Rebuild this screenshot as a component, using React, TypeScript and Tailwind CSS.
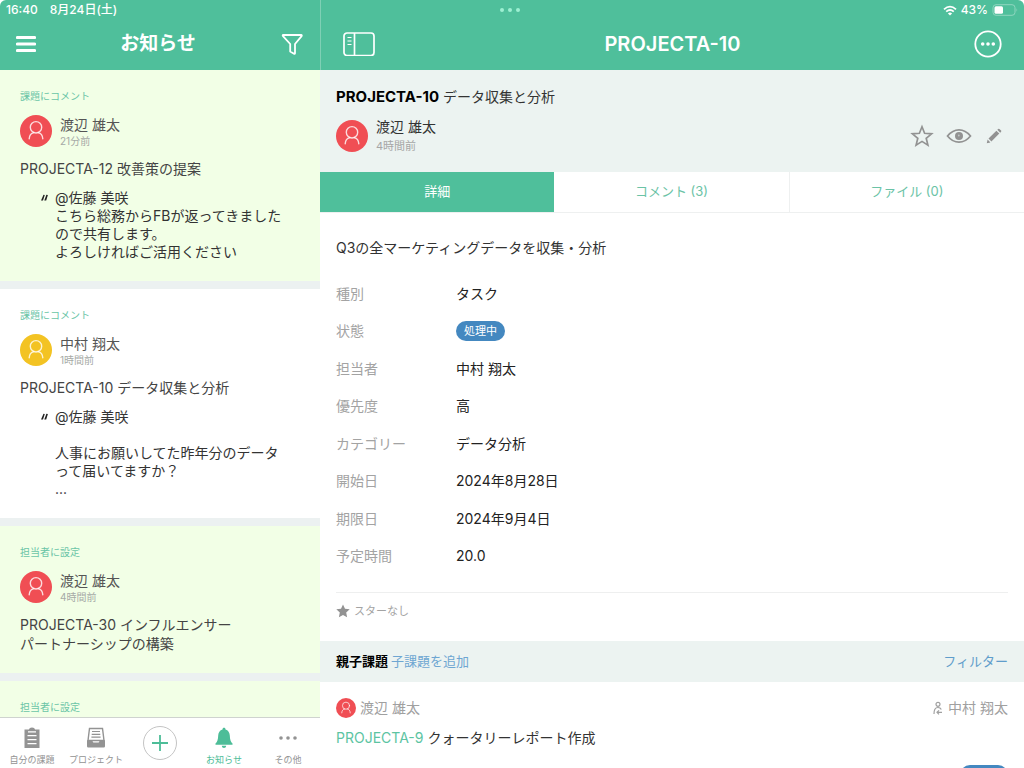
import type { ReactNode } from 'react';

type Notice = {
  kind: string;
  name?: string;
  ago?: string;
  title?: string;
  quote?: string;
  unread: boolean;
  color: 'red' | 'yellow';
};

const notices: Notice[] = [
  {
    kind: '課題にコメント',
    name: '渡辺 雄太',
    ago: '21分前',
    title: 'PROJECTA-12 改善策の提案',
    quote: '@佐藤 美咲\nこちら総務からFBが返ってきました\nので共有します。\nよろしければご活用ください',
    unread: true,
    color: 'red',
  },
  {
    kind: '課題にコメント',
    name: '中村 翔太',
    ago: '1時間前',
    title: 'PROJECTA-10 データ収集と分析',
    quote: '@佐藤 美咲\n\n人事にお願いしてた昨年分のデータ\nって届いてますか？\n...',
    unread: false,
    color: 'yellow',
  },
  {
    kind: '担当者に設定',
    name: '渡辺 雄太',
    ago: '4時間前',
    title: 'PROJECTA-30 インフルエンサー\nパートナーシップの構築',
    unread: true,
    color: 'red',
  },
  {
    kind: '担当者に設定',
    unread: true,
    color: 'red',
  },
];

const fields: [string, ReactNode][] = [
  ['種別', 'タスク'],
  [
    '状態',
    <span className="inline-flex h-5 items-center rounded-full bg-[#4488c0] px-2 text-[11px] text-white">処理中</span>,
  ],
  ['担当者', '中村 翔太'],
  ['優先度', '高'],
  ['カテゴリー', 'データ分析'],
  ['開始日', '2024年8月28日'],
  ['期限日', '2024年9月4日'],
  ['予定時間', '20.0'],
];

function Avatar({ color, small }: { color: 'red' | 'yellow'; small?: boolean }) {
  return (
    <svg
      viewBox="0 0 32 32"
      aria-hidden="true"
      className={`${small ? 'size-5' : 'size-8'} shrink-0 ${color === 'red' ? 'text-[#f04e54]' : 'text-[#f3c323]'}`}
    >
      <circle cx="16" cy="16" r="16" fill="currentColor" />
      <g fill="none" stroke="#fff" strokeOpacity="0.8" strokeWidth="1.4" strokeLinecap="round">
        <circle cx="16" cy="12.3" r="5.7" />
        <path d="M9.2 23.8c.2-3.600 1.800-5.600 4.600-6.200M22.800 23.800c-.2-3.600-1.800-5.600-4.600-6.200" />
      </g>
    </svg>
  );
}

function NoticeCard({ notice }: { notice: Notice }) {
  return (
    <article
      className={`border-b-8 border-[#ecf1f1] px-5 pt-[18px] pb-5 ${notice.unread ? 'bg-[#f2ffe6]' : 'bg-white'}`}
    >
      <p className="text-[10px] leading-4 text-[#6bc5a7]">{notice.kind}</p>
      {notice.name && (
        <div className="mt-[11px] flex items-center gap-2">
          <Avatar color={notice.color} />
          <div>
            <p className="text-sm leading-5 text-[#555]">{notice.name}</p>
            <p className="text-[10px] leading-3 text-[#a6aaa6]">{notice.ago}</p>
          </div>
        </div>
      )}
      {notice.title && (
        <h2 className="mt-3 text-sm leading-[19px] whitespace-pre-line text-[#444]">{notice.title}</h2>
      )}
      {notice.quote && (
        <div className="mt-[11px] flex text-sm leading-[18px] text-[#333]">
          <svg viewBox="0 0 8 8" aria-hidden="true" className="mt-[5px] mr-[7px] ml-5 size-2 shrink-0">
            <path d="M3.500.800 4.800 1 3 6.500H1zM6.400.800 7.900 1 6.200 6.500H4.300z" fill="#222" />
          </svg>
          <p className="whitespace-pre-line">{notice.quote}</p>
        </div>
      )}
    </article>
  );
}

function NavItem({ label, active, children }: { label: string; active?: boolean; children: ReactNode }) {
  return (
    <button
      className={`flex flex-1 flex-col items-center gap-[3px] pt-[9px] text-[9px] leading-4 whitespace-nowrap ${active ? 'text-[#4dbd98]' : 'text-[#939393]'}`}
    >
      {children}
      <span>{label}</span>
    </button>
  );
}

function NavBar() {
  return (
    <nav className="flex h-[51px] shrink-0 border-t border-[#cfd3cf] bg-white">
      <NavItem label="自分の課題">
        <svg viewBox="0 0 22 22" className="size-[22px]" aria-hidden="true">
          <path d="M3.500 2.500h4.500c.3-1.300 1.300-2 3-2s2.700.7 3 2h4.500v18.500h-15z" fill="currentColor" />
          <path d="M7 4.800h8M6.500 8.700h9M6.500 12.700h9M6.500 16.700h9" stroke="#fff" strokeWidth="1.300" />
        </svg>
      </NavItem>
      <NavItem label="プロジェクト">
        <svg viewBox="0 0 22 22" className="size-[22px]" aria-hidden="true">
          <path d="M4.500 1.500h13l1.500 12h-16z" fill="none" stroke="currentColor" strokeWidth="1.400" />
          <path d="M7 4.500h8M6.700 7.300h8.600M6.400 10.100h9.200" stroke="currentColor" strokeWidth="1.200" />
          <path d="M2 13.200h5l1.300 2.300h5.400l1.300-2.300h5v6q0 1.300-1.300 1.300H3.300Q2 20.500 2 19.200z" fill="currentColor" />
        </svg>
      </NavItem>
      <button aria-label="追加" className="flex flex-1 items-center justify-center text-[#4dbd98]">
        <span className="flex size-[34px] items-center justify-center rounded-full border border-[#c4c4c4]">
          <svg viewBox="0 0 18 18" className="size-[18px]" aria-hidden="true">
            <path d="M9 1v16M1 9h16" stroke="currentColor" strokeWidth="1.800" />
          </svg>
        </span>
      </button>
      <NavItem label="お知らせ" active>
        <svg viewBox="0 0 22 22" className="size-[22px]" aria-hidden="true">
          <path
            d="M11 .8c1 0 1.500.7 1.500 1.600 2.700.8 4.200 3 4.300 6 .1 4.200 1 6.500 2.700 8.100v1.200h-17v-1.200c1.700-1.600 2.600-3.900 2.700-8.100.1-3 1.600-5.200 4.300-6C9.500 1.500 10 .8 11 .8zM8.800 18.800h4.400c-.2 1.500-1 2.200-2.200 2.200s-2-.7-2.200-2.200z"
            fill="currentColor"
          />
        </svg>
      </NavItem>
      <NavItem label="その他">
        <svg viewBox="0 0 22 22" className="size-[22px]" aria-hidden="true">
          <g fill="currentColor">
            <circle cx="4" cy="11" r="1.800" />
            <circle cx="11" cy="11" r="1.800" />
            <circle cx="18" cy="11" r="1.800" />
          </g>
        </svg>
      </NavItem>
    </nav>
  );
}

function Sidebar() {
  return (
    <aside className="flex w-80 shrink-0 flex-col">
      <header className="h-[70px] shrink-0 bg-[#4fbf9b] text-white">
        <div className="flex h-5 items-center gap-3 px-[6px] text-xs font-medium">
          <span>16:40</span>
          <span>8月24日(土)</span>
        </div>
        <div className="flex h-12 items-center justify-between px-4">
          <button aria-label="メニュー">
            <svg viewBox="0 0 20 18" className="h-[18px] w-5" aria-hidden="true">
              <path d="M1.500 2.500h17M1.500 9h17M1.500 15.500h17" stroke="#fff" strokeWidth="3.200" strokeLinecap="round" />
            </svg>
          </button>
          <h1 className="text-[19px] font-bold">お知らせ</h1>
          <button aria-label="絞り込み">
            <svg viewBox="0 0 24 24" className="size-6" aria-hidden="true">
              <path
                d="M3.200 3h18c.6 0 .8.6.4 1.100L15 12v9.300c0 .6-.5.800-1 .5l-3.800-2.300V12L3 4.100C2.500 3.600 2.600 3 3.200 3z"
                fill="none"
                stroke="#fff"
                strokeWidth="1.800"
                strokeLinejoin="round"
              />
            </svg>
          </button>
        </div>
      </header>
      <div className="min-h-0 flex-1 overflow-hidden bg-[#f2ffe6]">
        {notices.map((notice, i) => (
          <NoticeCard key={i} notice={notice} />
        ))}
      </div>
      <NavBar />
    </aside>
  );
}

function DetailHeader() {
  return (
    <header className="h-[70px] shrink-0 border-l border-[#7fd0b5] bg-[#4fbf9b] text-white">
      <div className="grid h-5 grid-cols-[1fr_auto_1fr] items-center pr-[6px] text-xs font-medium">
        <svg viewBox="0 0 22 4" className="col-start-2 h-1 w-[22px] -translate-x-40" aria-hidden="true">
          <g fill="#9df0d2">
            <circle cx="3" cy="2" r="2" />
            <circle cx="11" cy="2" r="2" />
            <circle cx="19" cy="2" r="2" />
          </g>
        </svg>
        <div className="col-start-3 flex items-center justify-end gap-1">
          <svg viewBox="0 0 14 11" className="h-[11px] w-[14px]" aria-hidden="true">
            <g fill="none" stroke="#fff" strokeWidth="1.800">
              <path d="M1 4.300q6-5.400 12 0M3.200 6.600q3.800-3.300 7.600 0" />
            </g>
            <path d="M7 10.600 4.900 8.400q2.100-1.700 4.200 0z" fill="#fff" />
          </svg>
          <span>43%</span>
          <svg viewBox="0 0 26 12" className="h-3 w-[26px]" aria-hidden="true">
            <rect x="1" y=".7" width="22" height="10.600" rx="3" fill="none" stroke="#8fd6bf" />
            <rect x="2.500" y="2.200" width="8.500" height="7.600" rx="1.500" fill="#fff" />
            <path d="M24.500 4.200q1.500 1.800 0 3.600z" fill="#8fd6bf" />
          </svg>
        </div>
      </div>
      <div className="grid h-12 grid-cols-[1fr_auto_1fr] items-center px-[22px]">
        <button aria-label="サイドバー" className="justify-self-start">
          <svg viewBox="0 0 32 24" className="h-6 w-8" aria-hidden="true">
            <rect x="1" y="1" width="30" height="22.500" rx="3" fill="none" stroke="#fff" strokeWidth="1.700" />
            <path d="M11.500 1v22" stroke="#fff" strokeWidth="1.700" />
            <path d="M4.500 5.500h4M4.500 9h4M4.500 12.500h4" stroke="#fff" strokeWidth="1.200" />
          </svg>
        </button>
        <h1 className="text-xl font-semibold">PROJECTA-10</h1>
        <button aria-label="メニューを開く" className="justify-self-end">
          <svg viewBox="0 0 28 28" className="size-7" aria-hidden="true">
            <circle cx="14" cy="14" r="12.700" fill="none" stroke="#fff" strokeWidth="1.800" />
            <g fill="#fff">
              <circle cx="8.700" cy="14" r="1.800" />
              <circle cx="14" cy="14" r="1.800" />
              <circle cx="19.300" cy="14" r="1.800" />
            </g>
          </svg>
        </button>
      </div>
    </header>
  );
}

function IssueSummary() {
  return (
    <section className="bg-[#ecf3f1] px-4 pt-[17px] pb-[17px]">
      <h2 className="text-sm leading-5 text-[#333]">
        <b className="text-[15px] font-bold text-black">PROJECTA-10</b> データ収集と分析
      </h2>
      <div className="mt-[10px] flex items-center justify-between">
        <div className="flex items-center gap-2">
          <Avatar color="red" />
          <div>
            <p className="text-sm leading-5 text-[#333]">渡辺 雄太</p>
            <p className="text-[11px] leading-[18px] text-[#a6a6a6]">4時間前</p>
          </div>
        </div>
        <div className="mr-[6px] flex items-center text-[#929292]">
          <button aria-label="スター">
            <svg viewBox="0 0 24 24" className="size-6" aria-hidden="true">
              <path
                d="m12 2.800 2.600 6.500 7 .5-5.400 4.500 1.700 6.800L12 17.400l-5.900 3.700 1.700-6.800-5.400-4.500 7-.5z"
                fill="none"
                stroke="currentColor"
                strokeWidth="1.700"
              />
            </svg>
          </button>
          <button aria-label="ウォッチ" className="ml-3">
            <svg viewBox="0 0 26 16" className="h-4 w-[26px]" aria-hidden="true">
              <path d="M1.500 8q5-6.200 11.500-6.200T24.500 8q-5 6.200-11.500 6.200T1.500 8z" fill="none" stroke="currentColor" strokeWidth="1.700" />
              <circle cx="13" cy="8" r="4" fill="currentColor" />
              <circle cx="12.800" cy="7.500" r=".9" fill="#bfc4c3" />
            </svg>
          </button>
          <button aria-label="編集" className="ml-[14px]">
            <svg viewBox="0 0 16 16" className="size-4" aria-hidden="true">
              <path
                d="m.8 15.200.8-3.600 2.800 2.800zM2.500 10.600l7.900-7.900 2.900 2.900-7.900 7.900zM11.300 1.800l.9-.9q.6-.5 1.200 0l1.700 1.700q.5.600 0 1.200l-.9.900z"
                fill="currentColor"
              />
            </svg>
          </button>
        </div>
      </div>
    </section>
  );
}

export default function App() {
  return (
    <div className="flex h-screen overflow-hidden rounded-t-md bg-white font-['Inter','Noto_Sans_CJK_JP',sans-serif]">
      <Sidebar />
      <main className="flex min-w-0 flex-1 flex-col bg-white">
        <DetailHeader />
        <div className="min-h-0 flex-1 overflow-hidden">
          <IssueSummary />
          <div role="tablist" className="flex h-[41px] border-b border-[#eef0f0] text-[13px] text-[#6bc3a6]">
            <button role="tab" aria-selected="true" className="flex-1 bg-[#4fbf9b] text-white">
              詳細
            </button>
            <button role="tab" aria-selected="false" className="flex-1">
              コメント (3)
            </button>
            <button role="tab" aria-selected="false" className="flex-1 border-l border-[#eef0f0]">
              ファイル (0)
            </button>
          </div>
          <section className="px-4 pt-[25px] text-sm leading-5 text-[#333]">
            <p>Q3の全マーケティングデータを収集・分析</p>
            <dl className="mt-[17px] grid h-[300px] grid-rows-8">
              {fields.map(([label, value]) => (
                <div key={label} className="flex items-center">
                  <dt className="w-[120px] shrink-0 text-[#a3a3a3]">{label}</dt>
                  <dd className="flex items-center text-[#222]">{value}</dd>
                </div>
              ))}
            </dl>
            <div className="mt-[17px] flex h-[49px] items-start gap-1 border-t border-[#eeefef] pt-2 text-[11px] leading-5 text-[#a3a3a3]">
              <svg viewBox="0 0 14 14" className="mt-[3px] size-[14px]" aria-hidden="true">
                <path d="m7 .4 2 4.300 4.700.6-3.500 3.200.9 4.700L7 10.900l-4.100 2.300.9-4.700L.3 5.300 5 4.700z" fill="#929292" />
              </svg>
              <span>スターなし</span>
            </div>
          </section>
          <div className="flex h-[41px] items-center justify-between bg-[#ecf3f1] px-4 text-[13px]">
            <h3 className="font-bold text-black">
              親子課題{' '}
              <a href="#add" className="font-normal text-[#6ea6d2]">
                子課題を追加
              </a>
            </h3>
            <a href="#filter" className="text-[#5f9dcb]">
              フィルター
            </a>
          </div>
          <article className="px-4 pt-4 text-sm leading-5">
            <div className="flex items-center justify-between text-[#a0a0a0]">
              <div className="flex items-center gap-1">
                <Avatar color="red" small />
                <span>渡辺 雄太</span>
              </div>
              <div className="flex items-center gap-1">
                <svg viewBox="0 0 12 14" className="h-[14px] w-3" aria-hidden="true">
                  <g fill="none" stroke="#a0a0a0" strokeWidth="1.200">
                    <circle cx="6" cy="3.300" r="2" />
                    <path d="M2 13c0-4 1-6.500 4-6.500 1.500 0 2.700.7 3.300 2M5 11.300h5M7 9.300l-2 2 2 2" />
                  </g>
                </svg>
                <span>中村 翔太</span>
              </div>
            </div>
            <p className="mt-[10px] text-[#333]">
              <a href="#projecta-9" className="text-[#5cc4a2]">
                PROJECTA-9
              </a>{' '}
              クォータリーレポート作成
            </p>
            <div className="mt-[17px] flex justify-end">
              <span className="h-5 w-12 rounded-full bg-[#4488c0]" />
            </div>
          </article>
        </div>
      </main>
    </div>
  );
}
